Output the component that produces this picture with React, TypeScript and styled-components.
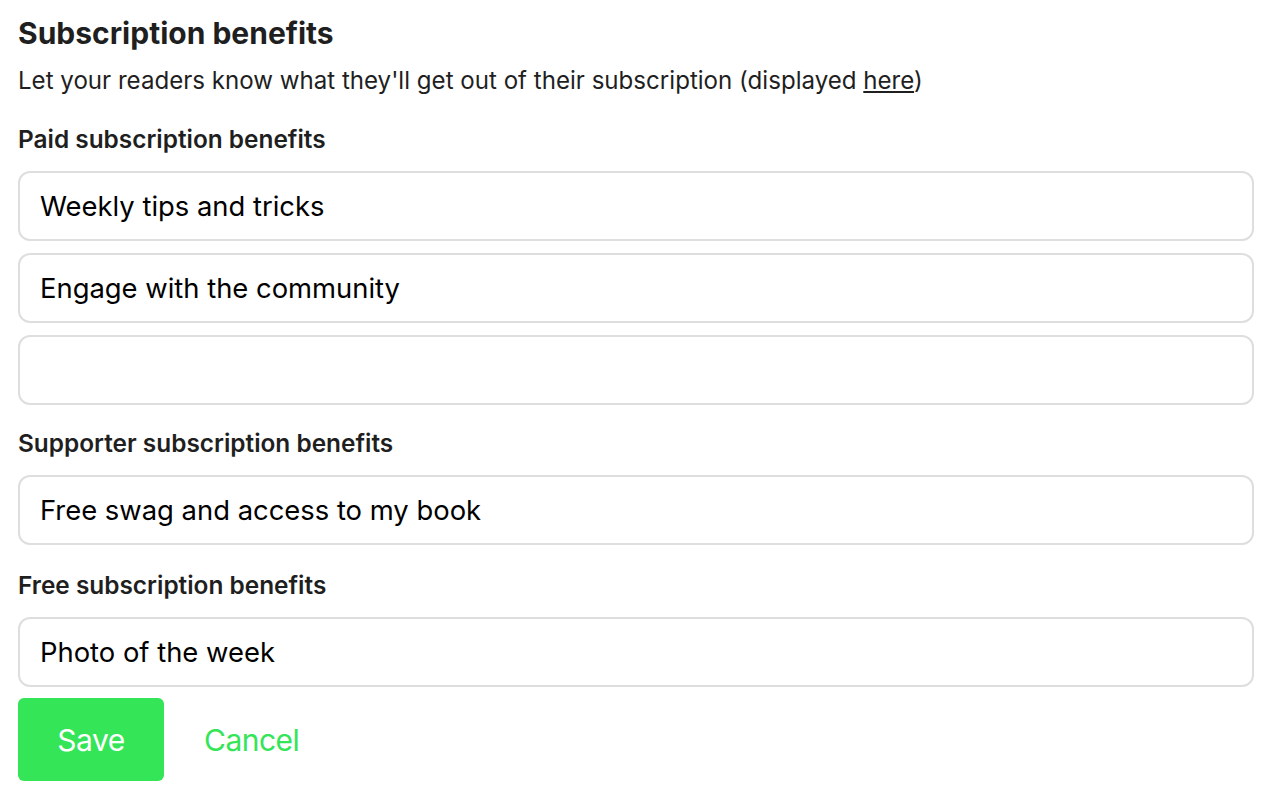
import React from "react";
import styled, { createGlobalStyle } from "styled-components";

const Global = createGlobalStyle`
  html, body { margin: 0; padding: 0; background: #fff; }
  body { font-family: Inter, "Noto Sans", sans-serif; color: #1f1f1f; }
  * { box-sizing: border-box; }
`;

const Page = styled.div`
  padding: 12px 24px 0 18px;
  display: flex;
  flex-direction: column;
`;

const Title = styled.h1`
  margin: 0;
  font-size: 30px;
  font-weight: 700;
  line-height: 42px;
  letter-spacing: 0;
`;

const Subtitle = styled.p`
  margin: 9px 0 0;
  font-size: 24.1px;
  line-height: 36px;
  letter-spacing: 0;
`;

const Link = styled.a`
  color: inherit;
  text-decoration: underline;
`;

const Label = styled.div<{ $top: number }>`
  margin-top: ${(p) => p.$top}px;
  font-size: 24.4px;
  font-weight: 600;
  line-height: 32px;
`;

const Fields = styled.div`
  display: flex;
  flex-direction: column;
  gap: 12px;
  margin-top: 16px;
`;

const Input = styled.input`
  width: 100%;
  height: 70px;
  border: 2px solid #dedede;
  border-radius: 12px;
  padding: 0 20px;
  font-family: Inter, "Noto Sans", sans-serif;
  font-size: 27.4px;
  color: #000;
  background: #fff;
  outline: none;
`;

const Actions = styled.div`
  display: flex;
  align-items: center;
  gap: 40px;
  margin-top: 11px;
`;

const SaveButton = styled.button`
  width: 146px;
  height: 83px;
  border: none;
  border-radius: 6px;
  background: #33e557;
  color: #fff;
  font-family: Inter, "Noto Sans", sans-serif;
  font-size: 30px;
  letter-spacing: -0.5px;
`;

const CancelButton = styled.button`
  border: none;
  background: none;
  padding: 0;
  color: #33e557;
  font-family: Inter, "Noto Sans", sans-serif;
  font-size: 30px;
  letter-spacing: -0.5px;
`;

export default function App() {
  return (
    <>
      <Global />
      <Page>
        <Title>Subscription benefits</Title>
        <Subtitle>
          Let your readers know what they'll get out of their subscription (displayed <Link href="#">here</Link>)
        </Subtitle>
        <Label $top={24}>Paid subscription benefits</Label>
        <Fields>
          <Input defaultValue="Weekly tips and tricks" />
          <Input defaultValue="Engage with the community" />
          <Input defaultValue="" />
        </Fields>
        <Label $top={22}>Supporter subscription benefits</Label>
        <Fields>
          <Input defaultValue="Free swag and access to my book" />
        </Fields>
        <Label $top={24}>Free subscription benefits</Label>
        <Fields>
          <Input defaultValue="Photo of the week" />
        </Fields>
        <Actions>
          <SaveButton>Save</SaveButton>
          <CancelButton>Cancel</CancelButton>
        </Actions>
      </Page>
    </>
  );
}
